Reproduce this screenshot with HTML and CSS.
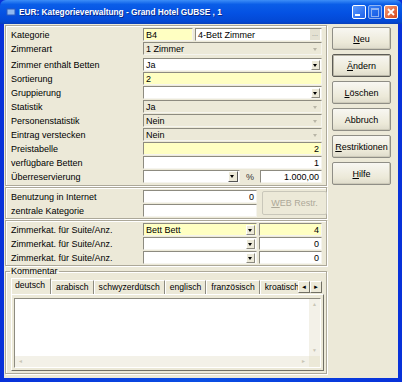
FILE: index.html
```html
<!DOCTYPE html>
<html lang="de">
<head>
    <meta charset="utf-8"/>
    <title>EUR: Kategorieverwaltung</title>
    <link rel="stylesheet" href="styles.css">
</head>
<body>
<div class="window">
    <div class="titlebar">
        <svg class="app-icon" width="10" height="10" viewBox="0 0 10 10">
            <rect x="1" y="2" width="8" height="6" fill="#8fb8f0" stroke="#2a5bc0" stroke-width="1"/>
        </svg>
        <span class="title">EUR: Kategorieverwaltung - Grand Hotel GUBSE , 1</span>
        <div class="caption-buttons">
            <span class="cap-btn"><span class="min-glyph"></span></span>
            <span class="cap-btn faded"><span class="max-glyph"></span></span>
            <span class="cap-btn close">
                <svg width="8" height="8" viewBox="0 0 8 8"><path d="M1 1 L7 7 M7 1 L1 7" stroke="#fff" stroke-width="1.8"/></svg>
            </span>
        </div>
    </div>

    <div class="client">
        <div class="left">
            <div class="group g1">
                <div class="row">
                    <label>Kategorie</label>
                    <div class="pair">
                        <div class="field yellow short">B4</div>
                        <div class="field grow">4-Bett Zimmer<span class="dots">...</span></div>
                    </div>
                </div>
                <div class="row">
                    <label>Zimmerart</label>
                    <div class="field off">1 Zimmer<span class="arrow dim"></span></div>
                </div>
                <div class="row gap-top">
                    <label>Zimmer enthält Betten</label>
                    <div class="field">Ja<span class="arrow"></span></div>
                </div>
                <div class="row">
                    <label>Sortierung</label>
                    <div class="field yellow">2</div>
                </div>
                <div class="row">
                    <label>Gruppierung</label>
                    <div class="field"><span class="arrow"></span></div>
                </div>
                <div class="row">
                    <label>Statistik</label>
                    <div class="field off">Ja<span class="arrow dim"></span></div>
                </div>
                <div class="row">
                    <label>Personenstatistik</label>
                    <div class="field off">Nein<span class="arrow dim"></span></div>
                </div>
                <div class="row">
                    <label>Eintrag verstecken</label>
                    <div class="field off">Nein<span class="arrow dim"></span></div>
                </div>
                <div class="row">
                    <label>Preistabelle</label>
                    <div class="field yellow num">2</div>
                </div>
                <div class="row">
                    <label>verfügbare Betten</label>
                    <div class="field num">1</div>
                </div>
                <div class="row">
                    <label>Überreservierung</label>
                    <div class="pair">
                        <div class="field combo-mid"><span class="arrow raised"></span></div>
                        <span class="percent">%</span>
                        <div class="field num grow">1.000,00</div>
                    </div>
                </div>
            </div>

            <div class="group g2">
                <div class="g2-grid">
                    <label>Benutzung in Internet</label>
                    <div class="field num">0</div>
                    <button class="btn web" disabled><u>W</u>EB Restr.</button>
                    <label>zentrale Kategorie</label>
                    <div class="field"></div>
                </div>
            </div>

            <div class="group g3">
                <div class="row">
                    <label>Zimmerkat. für Suite/Anz.</label>
                    <div class="pair">
                        <div class="field yellow combo-wide">Bett Bett<span class="arrow"></span></div>
                        <div class="field yellow num grow">4</div>
                    </div>
                </div>
                <div class="row">
                    <label>Zimmerkat. für Suite/Anz.</label>
                    <div class="pair">
                        <div class="field combo-wide"><span class="arrow"></span></div>
                        <div class="field num grow">0</div>
                    </div>
                </div>
                <div class="row">
                    <label>Zimmerkat. für Suite/Anz.</label>
                    <div class="pair">
                        <div class="field combo-wide"><span class="arrow"></span></div>
                        <div class="field num grow">0</div>
                    </div>
                </div>
            </div>

            <fieldset class="comment">
                <legend>Kommentar</legend>
                <div class="tabstrip">
                    <div class="tabs">
                        <span class="tab active">deutsch</span>
                        <span class="tab">arabisch</span>
                        <span class="tab">schwyzerdütsch</span>
                        <span class="tab">englisch</span>
                        <span class="tab">französisch</span>
                        <span class="tab">kroatisch</span>
                    </div>
                    <div class="tab-scroll">
                        <span class="sbtn">&#9668;</span><span class="sbtn">&#9658;</span>
                    </div>
                </div>
                <div class="tab-panel">
                    <div class="memo">
                        <div class="memo-body">
                            <div class="memo-text"></div>
                            <div class="vscroll">
                                <span class="sarrow">&#9650;</span>
                                <span class="sarrow">&#9660;</span>
                            </div>
                        </div>
                        <div class="hscroll">
                            <span class="sarrow">&#9668;</span>
                            <span class="sarrow">&#9658;</span>
                            <span class="corner"></span>
                        </div>
                    </div>
                </div>
            </fieldset>
        </div>

        <div class="buttons">
            <button class="btn"><u>N</u>eu</button>
            <button class="btn focus"><u>Ä</u>ndern</button>
            <button class="btn"><u>L</u>öschen</button>
            <button class="btn">Abbruch</button>
            <button class="btn"><u>R</u>estriktionen</button>
            <button class="btn"><u>H</u>ilfe</button>
        </div>
    </div>
</div>
</body>
</html>
```

FILE: styles.css
```css
body {
    margin: 0;
    font-family: 'Liberation Sans', Arial, sans-serif;
    font-size: 9px;
    color: #000;
    background-color: #ece9d8;
}

.window {
    width: 402px;
    height: 382px;
    box-sizing: border-box;
    padding: 0 4px 4px;
    background: linear-gradient(90deg, #0831d9, #0a4fe4 50%, #0831d9);
    display: flex;
    flex-direction: column;
}

/* title bar */
.titlebar {
    height: 24px;
    margin: 0 -4px;
    padding: 0 4px 0 6px;
    display: flex;
    align-items: center;
    background: linear-gradient(#3d8ef7 0%, #0a5ee8 18%, #0451e3 55%, #0348d4 90%, #0a3fb8 100%);
    border-radius: 6px 6px 0 0;
}

.app-icon {
    margin-right: 3px;
}

.title {
    color: #fff;
    font-weight: bold;
    font-size: 8.3px;
    text-shadow: 1px 1px #0a2a8a;
}

.caption-buttons {
    margin-left: auto;
    display: flex;
    gap: 2px;
}

.cap-btn {
    width: 14px;
    height: 14px;
    box-sizing: border-box;
    border: 1px solid #fff;
    border-radius: 2px;
    background: linear-gradient(135deg, #5b9bff, #1e5fe8);
    display: flex;
    align-items: center;
    justify-content: center;
}

.cap-btn.faded {
    opacity: 0.55;
}

.cap-btn.close {
    background: linear-gradient(135deg, #f39a74, #d8471c);
}

.min-glyph {
    width: 5px;
    height: 2px;
    background: #fff;
    margin-top: 6px;
    margin-right: 3px;
}

.max-glyph {
    width: 6px;
    height: 6px;
    border: 1px solid #fff;
    border-top-width: 2px;
}

/* client area */
.client {
    flex: 1;
    background-color: #ece9d8;
    display: flex;
    padding: 1px 7px 4px 1px;
    gap: 5px;
}

.left {
    width: 322px;
    display: flex;
    flex-direction: column;
}

.group {
    border: 1px solid #aca899;
    box-shadow: inset 1px 1px #fff, 1px 1px #fff;
    padding: 2px 4px 2px 5px;
}

.g1 {
    display: flex;
    flex-direction: column;
    gap: 1px;
}

.g2 {
    margin-top: 1px;
    padding-top: 2px;
    padding-bottom: 1px;
}

.g3 {
    margin-top: 1px;
    padding-top: 2px;
    padding-bottom: 1px;
    display: flex;
    flex-direction: column;
    gap: 1px;
}

.row {
    display: grid;
    grid-template-columns: 132px 179px;
    height: 13px;
    align-items: center;
}

.row.gap-top {
    margin-top: 2px;
}

label {
    white-space: nowrap;
}

.pair {
    display: flex;
    align-items: center;
    gap: 2px;
    height: 13px;
}

/* edit and combo fields */
.field {
    height: 13px;
    box-sizing: border-box;
    border: 1px solid;
    border-color: #8d8b80 #f5f4ee #f5f4ee #8d8b80;
    background-color: #fff;
    padding: 0 1px 0 2px;
    display: flex;
    align-items: center;
    white-space: nowrap;
    overflow: hidden;
}

.field.yellow {
    background-color: #ffffc2;
}

.field.off {
    background-color: #ece9d8;
}

.field.num {
    justify-content: flex-end;
    padding-right: 2px;
}

.field.short {
    width: 50px;
}

.field.grow {
    flex: 1;
}

.field.combo-mid {
    width: 97px;
}

.field.combo-wide {
    width: 114px;
}

.arrow {
    margin-left: auto;
    width: 9px;
    height: 10px;
    box-sizing: border-box;
    background-color: #ece9d8;
    border: 1px solid;
    border-color: #fff #8d8b80 #8d8b80 #fff;
    position: relative;
}

.arrow::after {
    content: '';
    position: absolute;
    left: 1px;
    top: 3px;
    border-left: 2.5px solid transparent;
    border-right: 2.5px solid transparent;
    border-top: 3px solid #000;
}

.arrow.dim {
    border-color: transparent;
    background: transparent;
}

.arrow.dim::after {
    border-top-color: #b8b5a6;
}

.arrow.raised {
    width: 10px;
    height: 11px;
    border-color: #fff #555 #555 #fff;
}

.dots {
    margin-left: auto;
    width: 10px;
    height: 11px;
    background-color: #e4e1d2;
    color: #888;
    font-size: 7px;
    text-align: center;
    line-height: 9px;
    border-left: 1px solid #fff;
}

.percent {
    width: 16px;
    text-align: center;
    color: #333;
}

.g2-grid {
    display: grid;
    grid-template-columns: 132px 114px 1fr;
    grid-template-rows: 13px 13px;
    row-gap: 1px;
    align-items: center;
}

.g2-grid .web {
    grid-row: 1 / 3;
    grid-column: 3;
    margin-left: 5px;
    height: 24px;
    align-self: start;
    margin-top: 1px;
}

/* buttons */
.buttons {
    width: 59px;
    padding-top: 2px;
    display: flex;
    flex-direction: column;
    gap: 4px;
}

.btn {
    height: 23px;
    width: 100%;
    padding: 0;
    font-family: inherit;
    font-size: 9px;
    color: #000;
    border: 1px solid #8f8e86;
    border-radius: 2px;
    background: linear-gradient(#f8f7f2, #ece9d8 70%, #dedbcb);
    box-shadow: inset -1px -1px #cdcab9;
}

.btn.focus {
    border-color: #5d5c56;
    box-shadow: inset 0 0 0 1px #b9b6a7;
}

.btn:disabled {
    color: #aca899;
    background: #ece9d8;
    border-color: #c9c7ba;
    box-shadow: none;
}

/* Kommentar group */
.comment {
    margin: 0;
    padding: 0 2px 2px 5px;
    border: 1px solid #aca899;
    box-shadow: inset 1px 1px #fff, 1px 1px #fff;
    flex: 1;
    display: flex;
    flex-direction: column;
    min-width: 0;
}

.comment legend {
    padding: 0 1px;
    margin-left: -1px;
}

.tabstrip {
    display: flex;
    align-items: flex-end;
    height: 16px;
    margin-top: 2px;
}

.tabs {
    width: 285px;
    display: flex;
    align-items: flex-end;
    overflow: hidden;
    padding-left: 2px;
}

.tab {
    height: 14px;
    box-sizing: border-box;
    padding: 0 4px;
    font-size: 8.6px;
    line-height: 13px;
    white-space: nowrap;
    border-left: 1px solid #fff;
    border-right: 1px solid #8d8b80;
    border-top: 1px solid #fff;
}

.tab.active {
    height: 16px;
    padding: 0 5px 0 3px;
    margin-left: -2px;
}

.tab-scroll {
    display: flex;
    margin-bottom: 1px;
}

.sbtn {
    width: 12px;
    height: 12px;
    box-sizing: border-box;
    font-size: 6px;
    line-height: 10px;
    text-align: center;
    border: 1px solid;
    border-color: #fff #716f64 #716f64 #fff;
    background-color: #ece9d8;
}

.tab-panel {
    flex: 1;
    border: 1px solid;
    border-color: #fff #716f64 #716f64 #fff;
    padding: 3px 2px 2px 2px;
    display: flex;
}

.memo {
    flex: 1;
    border: 1px solid;
    border-color: #8d8b80 #fff #fff #8d8b80;
    background-color: #fff;
    display: flex;
    flex-direction: column;
}

.memo-body {
    flex: 1;
    display: flex;
}

.memo-text {
    flex: 1;
}

.vscroll {
    width: 11px;
    background-color: #f3f1e8;
    display: flex;
    flex-direction: column;
    justify-content: space-between;
}

.hscroll {
    height: 11px;
    background-color: #f3f1e8;
    display: flex;
    align-items: center;
}

.hscroll .sarrow:nth-child(2) {
    margin-left: auto;
}

.sarrow {
    width: 11px;
    height: 11px;
    font-size: 5px;
    line-height: 11px;
    text-align: center;
    color: #c9c6b6;
    background-color: #f3f1e8;
}

.corner {
    width: 11px;
    height: 11px;
    background-color: #ece9d8;
}
```
